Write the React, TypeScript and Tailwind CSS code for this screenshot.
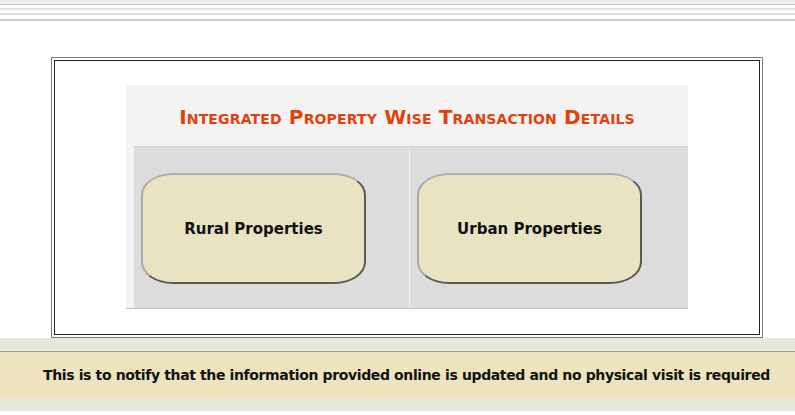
const FONT = { fontFamily: '"DejaVu Sans", Verdana, sans-serif' }

function PropertyButton({ label }: { label: string }) {
  return (
    <div className="flex h-full items-center pl-[7px] pt-[2px]">
      <button
        type="button"
        className="flex h-[111px] w-[225px] items-center justify-center rounded-[32px/22px] border-2 border-t-[#b0b0b0] border-l-[#a8a8a8] border-r-[#5a5a5a] border-b-[#5a5a5a] bg-[#e9e3c1] pt-[2px] text-[15px] font-bold text-[#111]"
      >
        {label}
      </button>
    </div>
  )
}

export default function App() {
  return (
    <div className="min-h-screen bg-white" style={FONT}>
      {/* header rules */}
      <div className="h-[5px] border-b border-[#c8c8c8] bg-[#efefef]" />
      <div className="h-[5px] border-b-2 border-[#e0e0e0] bg-white" />
      <div className="h-[5px] border-b-2 border-[#dcdcdc] bg-white" />
      <div className="h-[6px] border-b-2 border-[#cfcfcf] bg-white" />

      <div className="pt-[36px]">
        <div className="ml-[51px] w-[712px] border border-[#7a7a7a] p-[2px]">
          <div className="border border-[#222] bg-white pt-[24px] pb-[25px]">
            <div className="mx-auto w-[562px] border-b border-[#c4c4c4] bg-[#f3f3f3] pl-[8px]">
              <div className="flex h-[61px] items-center justify-center pr-[8px] pt-[3px]">
                <h1 className="text-[20px] font-bold tracking-[0.15px] text-[#e4400c] [font-variant:small-caps]">
                  Integrated Property Wise Transaction Details
                </h1>
              </div>
              <div className="grid h-[162px] grid-cols-[276px_1fr] border-t border-[#cfcfcf] bg-[#dcdcdc]">
                <div className="border-r border-[#efefef]">
                  <PropertyButton label="Rural Properties" />
                </div>
                <PropertyButton label="Urban Properties" />
              </div>
            </div>
          </div>
        </div>
      </div>

      <div className="bg-[#e8e7dc] pt-[13px] pb-[13px]">
        <div className="flex h-[47px] items-center border-t border-[#a49d7a] bg-[#ede3bc] pl-[43px]">
          <p className="whitespace-nowrap text-[14px] font-bold tracking-[-0.37px] text-[#111]">
            This is to notify that the information provided online is updated and no physical visit is required
          </p>
        </div>
      </div>
    </div>
  )
}
